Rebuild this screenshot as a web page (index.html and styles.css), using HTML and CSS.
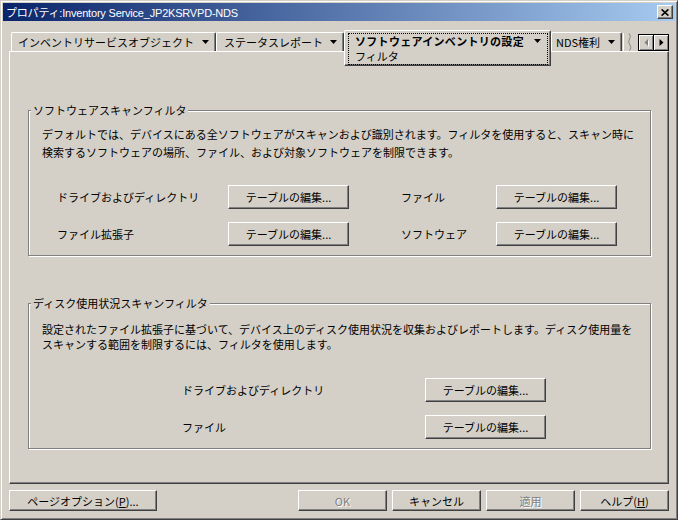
FILE: index.html
```html
<!DOCTYPE html>
<html lang="ja">
<head>
<meta charset="utf-8">
<title>プロパティ</title>
<link rel="stylesheet" href="styles.css">
</head>
<body>
<div class="window">
  <div class="titlebar">
    <span class="title">プロパティ:Inventory Service_JP2KSRVPD-NDS</span>
    <div class="close"><svg width="8" height="7" viewBox="0 0 8 7"><path d="M0.6 0.4 L7.4 6.6 M7.4 0.4 L0.6 6.6" stroke="#000" stroke-width="1.6" fill="none"/></svg></div>
  </div>
  <div class="client">
    <div class="tabrow">
      <div class="tab t1"><span>インベントリサービスオブジェクト</span><svg class="dd" width="7" height="4" viewBox="0 0 7 4"><path d="M0 0H7L3.5 4Z"/></svg></div>
      <div class="tab t2"><span>ステータスレポート</span><svg class="dd" width="7" height="4" viewBox="0 0 7 4"><path d="M0 0H7L3.5 4Z"/></svg></div>
      <div class="tab sel">
        <div class="focus">
          <div class="selhead"><b>ソフトウェアインベントリの設定</b><svg class="dd" width="7" height="4" viewBox="0 0 7 4"><path d="M0 0H7L3.5 4Z"/></svg></div>
          <div class="sub">フィルタ</div>
        </div>
      </div>
      <div class="tab t3"><span>NDS権利</span><svg class="dd" width="7" height="4" viewBox="0 0 7 4"><path d="M0 0H7L3.5 4Z"/></svg></div>
      <svg class="torn" width="14" height="18" viewBox="0 0 14 18"><path d="M1.5 0V18" stroke="#fff" stroke-width="1"/><path d="M7 0.5 Q9.5 3 7.5 6 Q5.5 9 8 12 Q10 15 7.5 17.5" stroke="#8a8a8a" stroke-width="1" fill="none"/></svg>
      <div class="scroll">
        <div class="sb"><svg width="5" height="8" viewBox="0 0 5 8"><path d="M5 1 L2 4.5 L5 8Z" fill="#fff"/><path d="M4 0 L0.5 3.5 L4 7Z" fill="#808080"/></svg></div>
        <div class="sb"><svg width="5" height="8" viewBox="0 0 5 8"><path d="M0.5 0 L4.5 3.5 L0.5 7Z" fill="#000"/></svg></div>
      </div>
    </div>
    <div class="panel">
      <div class="group g1">
        <div class="legend">ソフトウェアスキャンフィルタ</div>
        <div class="gbody">
          <p class="desc d1">デフォルトでは、デバイスにある全ソフトウェアがスキャンおよび識別されます。フィルタを使用すると、スキャン時に<br>検索するソフトウェアの場所、ファイル、および対象ソフトウェアを制限できます。</p>
          <div class="rows rows1">
            <span class="lbl">ドライブおよびディレクトリ</span>
            <button class="btn">テーブルの編集...</button>
            <span class="lbl right">ファイル</span>
            <button class="btn">テーブルの編集...</button>
            <span class="lbl">ファイル拡張子</span>
            <button class="btn">テーブルの編集...</button>
            <span class="lbl right">ソフトウェア</span>
            <button class="btn">テーブルの編集...</button>
          </div>
        </div>
      </div>
      <div class="group g2">
        <div class="legend">ディスク使用状況スキャンフィルタ</div>
        <div class="gbody">
          <p class="desc d2">設定されたファイル拡張子に基づいて、デバイス上のディスク使用状況を収集およびレポートします。ディスク使用量を<br>スキャンする範囲を制限するには、フィルタを使用します。</p>
          <div class="rows rows2">
            <span class="lbl">ドライブおよびディレクトリ</span>
            <button class="btn">テーブルの編集...</button>
            <span class="lbl">ファイル</span>
            <button class="btn">テーブルの編集...</button>
          </div>
        </div>
      </div>
    </div>
    <div class="actions">
      <button class="btn po">ページオプション(<u>P</u>)...</button>
      <button class="btn dis">OK</button>
      <button class="btn">キャンセル</button>
      <button class="btn dis">適用</button>
      <button class="btn">ヘルプ(<u>H</u>)</button>
    </div>
  </div>
</div>
</body>
</html>
```
FILE: styles.css
```css
* { box-sizing: border-box; }
html, body { margin: 0; padding: 0; }
body {
  width: 678px;
  height: 520px;
  overflow: hidden;
  background: #d4d0c8;
  font-family: "Noto Sans CJK JP", sans-serif;
  font-size: 11px;
  color: #000;
}
.window {
  width: 678px;
  height: 520px;
  border: 1px solid;
  border-color: #d4d0c8 #404040 #404040 #d4d0c8;
  box-shadow: inset 1px 1px #fff, inset -1px -1px #808080;
  padding: 2px;
}
.titlebar {
  height: 18px;
  display: flex;
  align-items: center;
  padding: 0 2px;
  background: linear-gradient(to right, #0a246a, #a6caf0);
  color: #fff;
}
.title {
  font-family: "Liberation Sans", "Noto Sans CJK JP", sans-serif;
  font-size: 11px;
  letter-spacing: -0.2px;
  white-space: nowrap;
  padding-left: 1px;
}
.close {
  margin-left: auto;
  width: 16px;
  height: 14px;
  display: flex;
  align-items: center;
  justify-content: center;
  background: #d4d0c8;
  border: 1px solid;
  border-color: #fff #404040 #404040 #fff;
  box-shadow: inset -1px -1px #808080;
}
.client { padding: 9px 6px 0; }
.tabrow {
  display: flex;
  align-items: flex-start;
  height: 21px;
  padding-left: 2px;
}
.tab {
  display: flex;
  align-items: center;
  flex: none;
  height: 19px;
  margin-top: 2px;
  border: 1px solid;
  border-bottom: 0;
  border-color: #fff #404040 #fff #fff;
  box-shadow: inset -1px 0 #808080;
  border-radius: 2px 2px 0 0;
  padding: 0 6px;
  white-space: nowrap;
  background: #d4d0c8;
}
.dd { margin-left: auto; flex: none; }
.t1 { width: 205px; }
.t2 { width: 128px; padding-left: 7px; }
.t3 { width: 71px; padding-left: 4px; }
.sel {
  display: block;
  position: relative;
  z-index: 1;
  width: 207px;
  height: 36px;
  margin-top: 0;
  border: 1px solid;
  border-color: #fff #404040 #404040 #fff;
  box-shadow: inset -1px -1px #808080;
  padding: 2px 2px 0 3px;
}
.focus {
  height: 100%;
  border: 1px dotted #000;
  padding: 0 6px;
}
.selhead {
  display: flex;
  align-items: center;
  height: 14px;
  line-height: 14px;
}
.selhead b { font-weight: bold; letter-spacing: 0.3px; }
.sub { line-height: 16px; }
.torn { flex: none; margin-top: 3px; }
.scroll {
  margin-left: auto;
  margin-top: 4px;
  display: flex;
  width: 31px;
  height: 17px;
  border: 1px solid #000;
  flex: none;
}
.sb {
  flex: 1;
  display: flex;
  align-items: center;
  justify-content: center;
  box-shadow: inset 1px 1px #fff, inset -1px -1px #808080;
}
.sb + .sb { border-left: 1px solid #000; }
.panel {
  height: 433px;
  border: 1px solid;
  border-color: #fff #404040 #404040 #fff;
  box-shadow: inset -1px -1px #808080;
  padding: 0 17px 0 18px;
}
.group {
  border: 1px solid #808080;
  box-shadow: inset 1px 1px #fff, 1px 1px #fff;
  padding-bottom: 9px;
}
.g1 { margin-top: 58px; }
.g2 { margin-top: 47px; }
.legend {
  display: table;
  margin: -7px 0 0 2px;
  padding: 0 2px;
  line-height: 13px;
  background: #d4d0c8;
  white-space: nowrap;
}
.gbody { padding: 0 13px; }
.desc { margin: 0; white-space: nowrap; }
.d1 { margin-top: 8px; line-height: 18px; }
.d2 { margin-top: 12px; line-height: 15px; }
.rows {
  display: grid;
  align-items: center;
  row-gap: 13px;
}
.rows1 {
  margin-top: 24px;
  padding-left: 15px;
  grid-template-columns: 171px 121px 147px 121px;
}
.rows2 {
  margin-top: 26px;
  padding-left: 140px;
  grid-template-columns: 243px 121px;
}
.lbl { white-space: nowrap; }
.lbl.right { padding-left: 52px; }
.btn {
  font: inherit;
  color: #000;
  height: 24px;
  width: 121px;
  padding: 0;
  margin: 0;
  background: #d4d0c8;
  border: 1px solid;
  border-color: #fff #404040 #404040 #fff;
  box-shadow: inset -1px -1px #808080;
  border-radius: 0;
  white-space: nowrap;
}
.actions {
  display: flex;
  gap: 5px;
  margin-top: 6px;
}
.actions .btn { height: 21px; width: 89px; }
.actions .po { width: 148px; margin-right: auto; }
.btn.dis { color: #808080; text-shadow: 1px 1px #fff; }
```
